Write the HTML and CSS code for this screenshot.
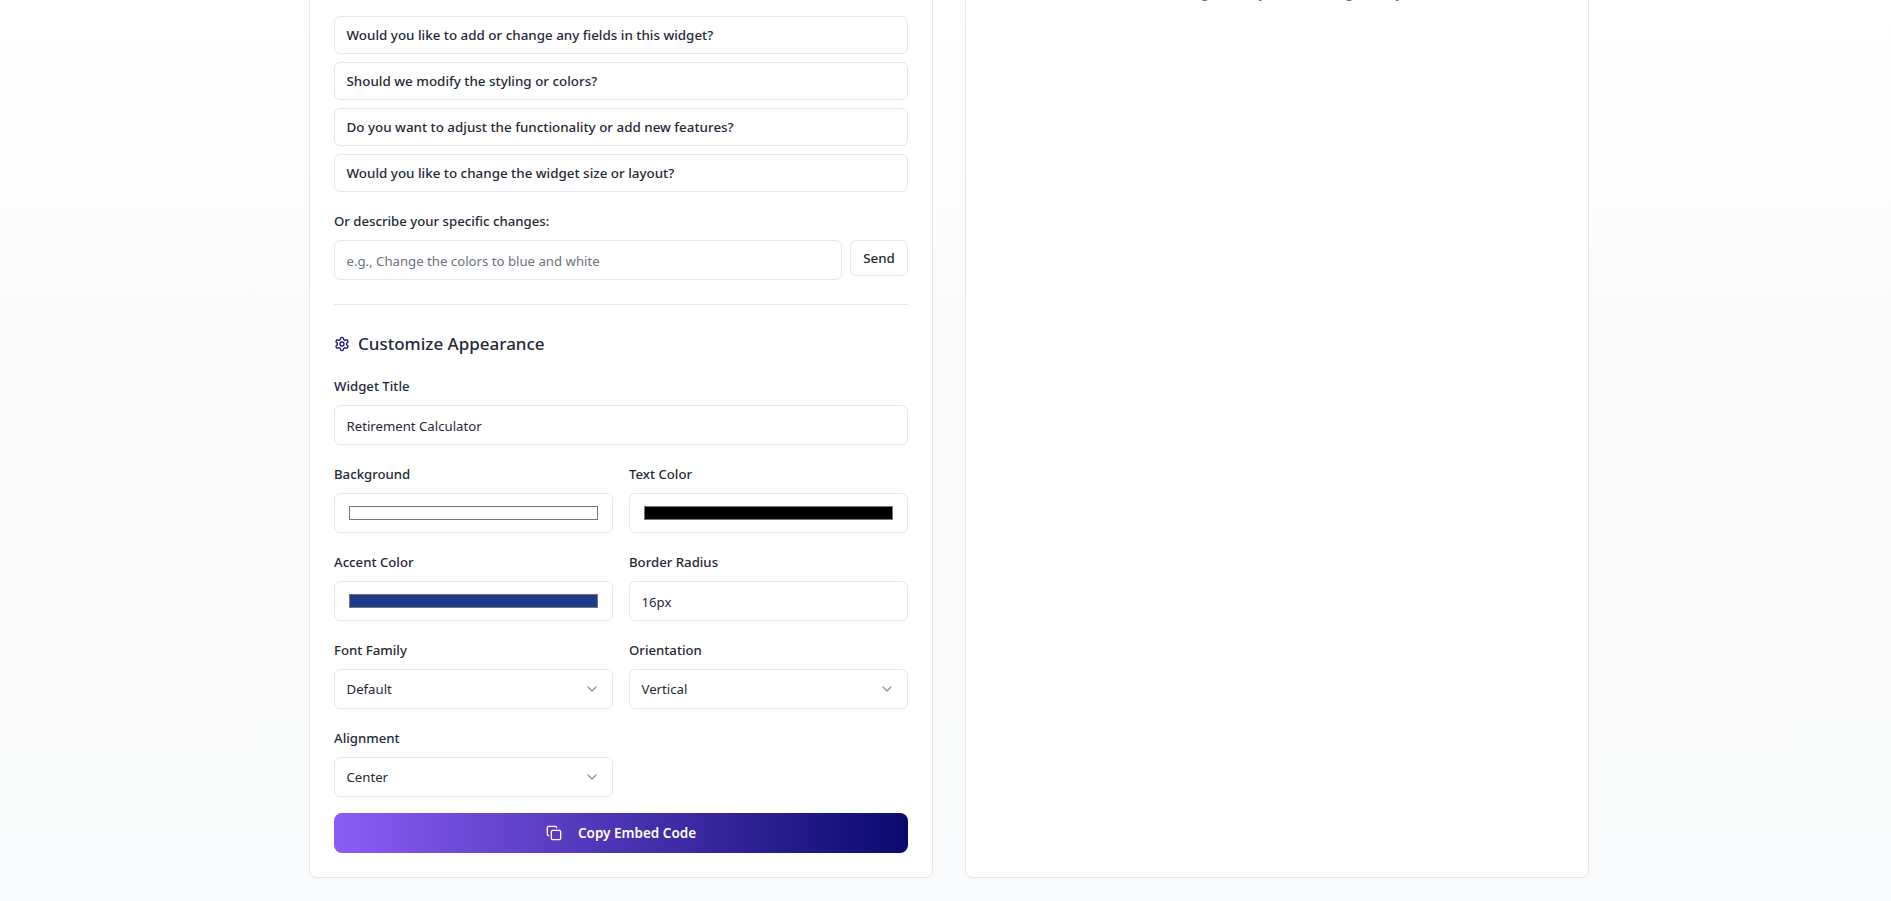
FILE: index.html
```html
<!DOCTYPE html>
<html lang="en">
<head>
<meta charset="utf-8">
<title>Customize Widget</title>
<link rel="stylesheet" href="styles.css">
</head>
<body>
<main class="page">
  <section class="card editor">
    <div class="questions">
      <button class="question">Would you like to add or change any fields in this widget?</button>
      <button class="question">Should we modify the styling or colors?</button>
      <button class="question">Do you want to adjust the functionality or add new features?</button>
      <button class="question">Would you like to change the widget size or layout?</button>
    </div>
    <label class="label describe-label">Or describe your specific changes:</label>
    <div class="describe-row">
      <input class="field text grow" type="text" placeholder="e.g., Change the colors to blue and white">
      <button class="send">Send</button>
    </div>
    <hr class="divider">
    <h2 class="heading">
      <svg class="gear" viewBox="0 0 24 24" width="16" height="16" fill="none" stroke="currentColor" stroke-width="2" stroke-linecap="round" stroke-linejoin="round"><path d="M12.22 2h-.44a2 2 0 0 0-2 2v.18a2 2 0 0 1-1 1.730l-.43.25a2 2 0 0 1-2 0l-.15-.08a2 2 0 0 0-2.73.73l-.22.38a2 2 0 0 0 .73 2.73l.15.1a2 2 0 0 1 1 1.72v.51a2 2 0 0 1-1 1.74l-.15.09a2 2 0 0 0-.73 2.73l.22.38a2 2 0 0 0 2.73.73l.15-.08a2 2 0 0 1 2 0l.43.25a2 2 0 0 1 1 1.73V20a2 2 0 0 0 2 2h.44a2 2 0 0 0 2-2v-.18a2 2 0 0 1 1-1.73l.43-.25a2 2 0 0 1 2 0l.15.08a2 2 0 0 0 2.73-.73l.22-.39a2 2 0 0 0-.73-2.73l-.15-.08a2 2 0 0 1-1-1.74v-.5a2 2 0 0 1 1-1.74l.15-.09a2 2 0 0 0 .73-2.73l-.22-.38a2 2 0 0 0-2.73-.73l-.15.08a2 2 0 0 1-2 0l-.43-.25a2 2 0 0 1-1-1.73V4a2 2 0 0 0-2-2z"/><circle cx="12" cy="12" r="3"/></svg>
      Customize Appearance
    </h2>
    <div class="form">
      <div class="group full">
        <label class="label">Widget Title</label>
        <input class="field text" type="text" value="Retirement Calculator">
      </div>
      <div class="group">
        <label class="label">Background</label>
        <input class="field color" type="color" value="#ffffff">
      </div>
      <div class="group">
        <label class="label">Text Color</label>
        <input class="field color" type="color" value="#000000">
      </div>
      <div class="group">
        <label class="label">Accent Color</label>
        <input class="field color" type="color" value="#1e3a8a">
      </div>
      <div class="group">
        <label class="label">Border Radius</label>
        <input class="field text" type="text" value="16px">
      </div>
      <div class="group">
        <label class="label">Font Family</label>
        <button class="field select">Default
          <svg class="chevron" viewBox="0 0 24 24" width="16" height="16" fill="none" stroke="currentColor" stroke-width="2" stroke-linecap="round" stroke-linejoin="round"><path d="m6 9 6 6 6-6"/></svg>
        </button>
      </div>
      <div class="group">
        <label class="label">Orientation</label>
        <button class="field select">Vertical
          <svg class="chevron" viewBox="0 0 24 24" width="16" height="16" fill="none" stroke="currentColor" stroke-width="2" stroke-linecap="round" stroke-linejoin="round"><path d="m6 9 6 6 6-6"/></svg>
        </button>
      </div>
      <div class="group">
        <label class="label">Alignment</label>
        <button class="field select">Center
          <svg class="chevron" viewBox="0 0 24 24" width="16" height="16" fill="none" stroke="currentColor" stroke-width="2" stroke-linecap="round" stroke-linejoin="round"><path d="m6 9 6 6 6-6"/></svg>
        </button>
      </div>
    </div>
    <button class="copy">
      <svg viewBox="0 0 24 24" width="16" height="16" fill="none" stroke="currentColor" stroke-width="2" stroke-linecap="round" stroke-linejoin="round"><rect x="8" y="8" width="14" height="14" rx="2" ry="2"/><path d="M4 16c-1.100 0-2-.9-2-2V4c0-1.100.9-2 2-2h10c1.100 0 2 .9 2 2"/></svg>
      Copy Embed Code
    </button>
  </section>
  <section class="card preview">
    <p class="preview-note">All changes to any field show right away</p>
  </section>
</main>
</body>
</html>
```
FILE: styles.css
```css
* { box-sizing: border-box; }
html, body { margin: 0; height: 901px; overflow: hidden; }
body {
  background: linear-gradient(#ffffff 0, #fdfdfd 190px, #fafafa 330px, #f9fafb 100%);
  font-family: "Noto Sans", sans-serif;
  font-size: 13.2px;
  color: #1f2937;
}
.page {
  display: flex;
  gap: 32px;
  width: 1280px;
  height: 901px;
  margin-left: 309px;
  padding-bottom: 23px;
}
.card {
  width: 624px;
  background: #fff;
  border: 1px solid #e5e7eb;
  border-top: 0;
  border-radius: 0 0 8px 8px;
}
.editor { padding: 16px 24px 24px; }
.preview { overflow: hidden; }
.preview-note {
  margin: -18px 0 0;
  font-size: 13.4px;
  line-height: 22px;
  text-align: center;
  color: #6b7280;
}
.questions { display: flex; flex-direction: column; gap: 8px; }
.question {
  height: 38px;
  padding: 0 12px 0 11.5px;
  background: #fff;
  border: 1px solid #e5e7eb;
  border-radius: 6px;
  font: 500 13.4px "Noto Sans", sans-serif;
  color: #1f2937;
  text-align: left;
}
.label {
  display: block;
  font-weight: 500;
  line-height: 18px;
  margin-bottom: 10px;
  color: #1f2937;
}
.describe-label { margin: 20px 0 10px; }
.describe-row { display: flex; gap: 8px; align-items: flex-start; }
.field {
  display: block;
  width: 100%;
  height: 40px;
  padding: 0 12px 0 11.5px;
  background: #fff;
  border: 1px solid #e5e7eb;
  border-radius: 6px;
  font: 400 13.2px "Noto Sans", sans-serif;
  color: #1f2937;
}
.text { padding-top: 1px; }
.field::placeholder { color: #6b7280; opacity: 1; }
.grow { flex: 1; width: auto; }
.send {
  width: 58px;
  height: 36px;
  background: #fff;
  border: 1px solid #e5e7eb;
  border-radius: 6px;
  font: 500 13.4px "Noto Sans", sans-serif;
  color: #1f2937;
}
.divider {
  height: 1px;
  margin: 24px 0 25px;
  border: 0;
  background: #e5e7eb;
}
.heading {
  display: flex;
  align-items: center;
  gap: 8px;
  margin: 0 0 19px;
  font-size: 17px;
  line-height: 28px;
  font-weight: 500;
  color: #1f2937;
}
.gear { color: #1a1a7e; }
.form {
  display: grid;
  grid-template-columns: 1fr 1fr;
  column-gap: 16px;
  row-gap: 20px;
}
.full { grid-column: 1 / -1; }
.color { padding: 8px 12px; cursor: pointer; }
.select {
  display: flex;
  align-items: center;
  justify-content: space-between;
  text-align: left;
}
.chevron { color: #6b7280; opacity: 0.75; }
.copy {
  display: flex;
  align-items: center;
  justify-content: center;
  gap: 16px;
  width: 100%;
  height: 40px;
  margin-top: 16px;
  border: 0;
  border-radius: 8px;
  background: linear-gradient(90deg, #8b5cf6, #0a0a6e);
  color: #fff;
  font: 600 13.5px "Noto Sans", sans-serif;
}
```
